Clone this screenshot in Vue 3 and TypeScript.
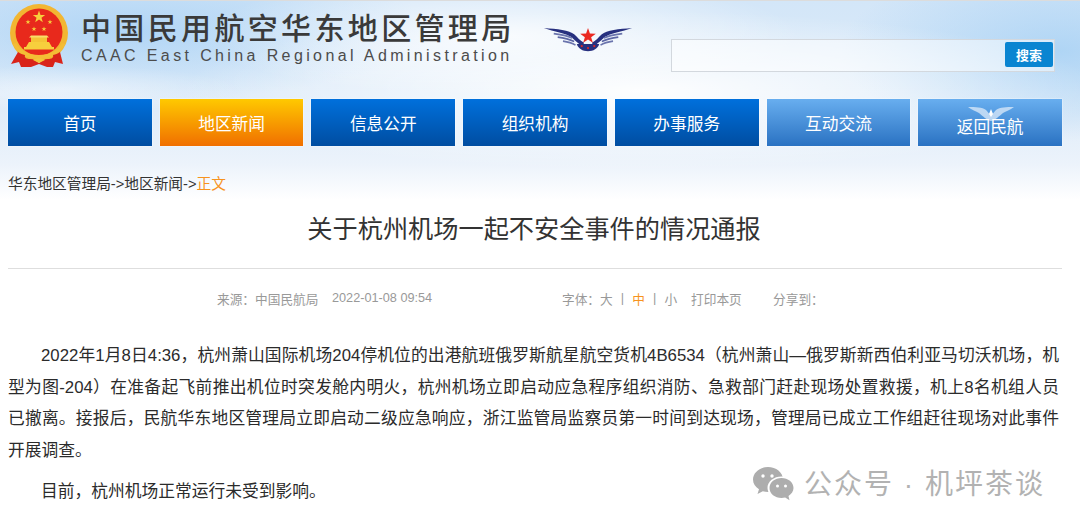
<template>
  <div class="page">
    <div class="sky">
      <header class="masthead">
        <svg class="emblem" viewBox="9 3 60 65" width="60" height="65" aria-hidden="true">
          <circle cx="39" cy="33" r="29" fill="#f2b632" />
          <circle cx="39" cy="32" r="23.5" fill="#e8291c" />
          <polygon v-for="star in emblemStars" :key="star.x" :points="starPoints(star.x, star.y, star.r)" fill="#f7cf3d" />
          <path d="M29 42h20l3 5H26z" fill="#f7cf3d" />
          <rect x="31" y="37" width="16" height="5" fill="#f5c437" />
          <path d="M29 37.5h20l-2-2H31z" fill="#f9dd6a" />
          <rect x="24" y="47" width="30" height="2.5" fill="#f7cf3d" />
          <path d="M13 44c4 10 15 15 26 15s22-5 26-15l-3-1c-4 8-13 12-23 12s-19-4-23-12z" fill="#f4bd35" />
          <path d="M18 52c3 2 4 2 7 3-1 3 2 4 5 4 4 0 6 2 9 4 3-2 5-4 9-4 3 0 6-1 5-4 3-1 4-1 7-3l3 12-8-2-2 5H47l-8-3-8 3H21l-2-5-8 2z" fill="#d9241a" />
          <path d="M33 60c2-2 10-2 12 0l-6 3z" fill="#f4c53a" />
        </svg>
        <div class="org">
          <div class="org-cn">中国民用航空华东地区管理局</div>
          <div class="org-en">CAAC East China Regional Administration</div>
        </div>
        <svg class="wings" viewBox="30 40 268 82" width="90" height="27" aria-hidden="true">
          <g>
            <path d="M30 49C70 52 108 56 122 68c10 9 18 20 30 26l-4 10c-15-6-26-20-36-28C98 66 60 60 30 49z" fill="#27307f" />
            <path d="M60 66c25 3 45 7 56 14" stroke="#6a74ad" stroke-width="5" fill="none" />
            <path d="M72 77c20 3 36 7 50 13" stroke="#5c66a5" stroke-width="5" fill="none" />
            <path d="M88 89c14 2 28 6 38 12" stroke="#6a74ad" stroke-width="5" fill="none" />
          </g>
          <g>
            <path d="M298 49c-40 3-78 7-92 19-10 9-18 20-30 26l4 10c15-6 26-20 36-28 14-10 52-16 82-27z" fill="#27307f" />
            <path d="M268 66c-25 3-45 7-56 14" stroke="#6a74ad" stroke-width="5" fill="none" />
            <path d="M256 77c-20 3-36 7-50 13" stroke="#5c66a5" stroke-width="5" fill="none" />
            <path d="M240 89c-14 2-28 6-38 12" stroke="#6a74ad" stroke-width="5" fill="none" />
          </g>
          <path d="M130 98h68c-4 14-18 22-34 22s-30-8-34-22z" fill="#27307f" />
          <circle cx="145" cy="104" r="3.5" fill="#d8272a" />
          <circle cx="164" cy="110" r="3.5" fill="#d8272a" />
          <circle cx="183" cy="104" r="3.5" fill="#d8272a" />
          <polygon :points="starPoints(164, 74, 25)" fill="#ea2a22" />
        </svg>
        <form class="search" @submit.prevent>
          <input class="search-input" type="text" aria-label="搜索" />
          <button class="search-btn" type="submit">搜索</button>
        </form>
      </header>

      <nav class="nav">
        <a
          v-for="item in navItems"
          :key="item.text"
          href="#"
          class="nav-item"
          :class="item.kind"
        >
          <svg v-if="item.kind === 'back'" class="nav-wings" viewBox="0 0 46 16" width="46" height="16" aria-hidden="true">
            <path d="M0 1c8 0 14 0 18 3 2 2 3 4 5 5 2-1 3-3 5-5 4-3 10-3 18-3-4 3-8 4-11 6-4 3-7 7-12 8-5-1-8-5-12-8C8 5 4 4 0 1z" fill="#d6e6f7" fill-opacity=".8" />
            <polygon points="23,3 25,8 23,11 21,8" fill="#fff" />
          </svg>
          <span class="nav-text">{{ item.text }}</span>
        </a>
      </nav>

      <div class="crumbs">华东地区管理局-&gt;地区新闻-&gt;<span class="crumb-now">正文</span></div>
    </div>

    <main class="article">
      <h1 class="title">关于杭州机场一起不安全事件的情况通报</h1>
      <div class="meta">
        <span class="meta-source">来源：中国民航局</span>
        <span class="meta-date">2022-01-08 09:54</span>
        <span class="meta-font">字体：</span>
        <span class="meta-size">大</span>
        <span class="meta-sep">|</span>
        <span class="meta-size is-on">中</span>
        <span class="meta-sep">|</span>
        <span class="meta-size">小</span>
        <span class="meta-print">打印本页</span>
        <span class="meta-share">分享到：</span>
      </div>
      <div class="body">
        <p v-for="(para, i) in paragraphs" :key="i">
          <span v-for="line in para" :key="line" class="line">{{ line }}</span>
        </p>
      </div>
    </main>

    <div class="watermark">
      <svg class="wechat" viewBox="0 0 42 34" width="42" height="34" aria-hidden="true">
        <path d="M15 0C7 0 0 5.500 0 12.500c0 4 2.300 7.500 6 9.800L4.500 27l5.300-2.700c1.600.5 3.400.8 5.200.8 8 0 15-5.500 15-12.600S23 0 15 0z" fill="#adadad" />
        <ellipse cx="28.500" cy="21" rx="14" ry="11.500" fill="#fff" />
        <path d="M28.500 11C22 11 16.500 15.300 16.500 21s5.500 10 12 10c1.300 0 2.500-.2 3.700-.5l4.300 2.800-1-4.300c3-2 5-4.800 5-8C40.500 15.300 35 11 28.500 11z" fill="#adadad" />
        <circle cx="10" cy="9" r="1.700" fill="#fff" />
        <circle cx="19" cy="9" r="1.700" fill="#fff" />
        <circle cx="24.500" cy="19" r="1.500" fill="#fff" />
        <circle cx="32.500" cy="19" r="1.500" fill="#fff" />
      </svg>
      <span class="watermark-text">公众号 · 机坪茶谈</span>
    </div>
  </div>
</template>

<script setup lang="ts">
interface NavItem {
  text: string
  kind: string
}

const navItems: NavItem[] = [
  { text: '首页', kind: 'dark' },
  { text: '地区新闻', kind: 'active' },
  { text: '信息公开', kind: 'dark' },
  { text: '组织机构', kind: 'dark' },
  { text: '办事服务', kind: 'dark' },
  { text: '互动交流', kind: 'light' },
  { text: '返回民航', kind: 'back' },
]

const emblemStars = [
  { x: 39, y: 17, r: 6.5 },
  { x: 28, y: 22, r: 2.6 },
  { x: 50, y: 22, r: 2.6 },
  { x: 34, y: 29, r: 2.6 },
  { x: 44, y: 29, r: 2.6 },
]

const paragraphs: string[][] = [
  [
    '2022年1月8日4:36，杭州萧山国际机场204停机位的出港航班俄罗斯航星航空货机4B6534（杭州萧山—俄罗斯新西伯利亚马切沃机场，机',
    '型为图-204）在准备起飞前推出机位时突发舱内明火，杭州机场立即启动应急程序组织消防、急救部门赶赴现场处置救援，机上8名机组人员',
    '已撤离。接报后，民航华东地区管理局立即启动二级应急响应，浙江监管局监察员第一时间到达现场，管理局已成立工作组赶往现场对此事件',
    '开展调查。',
  ],
  ['目前，杭州机场正常运行未受到影响。'],
]

function starPoints(cx: number, cy: number, r: number): string {
  const pts: string[] = []
  for (let i = 0; i < 10; i++) {
    const radius = i % 2 === 0 ? r : r * 0.4
    const angle = (Math.PI / 5) * i - Math.PI / 2
    pts.push(`${(cx + radius * Math.cos(angle)).toFixed(2)},${(cy + radius * Math.sin(angle)).toFixed(2)}`)
  }
  return pts.join(' ')
}
</script>

<style>
html,
body {
  margin: 0;
  background: #fff;
}
</style>

<style scoped>
.page {
  position: relative;
  width: 1080px;
  height: 528px;
  overflow: hidden;
  background: #fff;
  font-family: "Liberation Sans", "Noto Sans CJK SC", sans-serif;
  color: #333;
}

.sky {
  height: 200px;
  border-top: 1px solid #dcdcdc;
  box-sizing: border-box;
  background:
    radial-gradient(ellipse 300px 60px at 500px 35px, rgba(255, 255, 255, 0.8), transparent),
    radial-gradient(ellipse 460px 80px at 640px 90px, rgba(255, 255, 255, 0.95), transparent),
    radial-gradient(ellipse 180px 24px at 60px 88px, rgba(255, 255, 255, 0.45), transparent),
    radial-gradient(ellipse 220px 90px at 1060px 50px, rgba(165, 208, 244, 0.8), transparent),
    radial-gradient(ellipse 300px 70px at 130px 30px, rgba(170, 210, 245, 0.85), transparent),
    linear-gradient(180deg, #d3e6f8 0%, #dfecf9 55%, #ecf3fb 82%, #fff 100%);
}

.masthead {
  display: flex;
  align-items: flex-start;
  height: 98px;
  padding: 2px 25px 0 10px;
  box-sizing: border-box;
}

.emblem {
  flex: none;
  margin-left: -1px;
}

.org {
  margin-left: 12px;
  padding-top: 8px;
  width: 440px;
}

.org-cn {
  font-size: 30px;
  line-height: 36px;
  letter-spacing: 3.350px;
  font-weight: 500;
  color: #3a3a3a;
  white-space: nowrap;
}

.org-en {
  font-size: 16px;
  line-height: 18px;
  letter-spacing: 3.380px;
  color: #4c4c4c;
  white-space: nowrap;
}

.wings {
  flex: none;
  margin: 22px 0 0 22px;
}

.search {
  position: relative;
  margin: 36px 0 0 auto;
  width: 384px;
  height: 33px;
}

.search-input {
  display: block;
  width: 100%;
  height: 100%;
  box-sizing: border-box;
  border: 1.500px solid #d3d8de;
  background: rgba(255, 255, 255, 0.5);
  outline: none;
}

.search-btn {
  position: absolute;
  top: 3px;
  right: 2px;
  width: 48px;
  height: 25px;
  padding: 0;
  border: 0;
  border-radius: 2px;
  background: #0a85d1;
  color: #fff;
  font: 700 13px "Liberation Sans", "Noto Sans CJK SC", sans-serif;
}

.nav {
  display: flex;
  gap: 8px;
  padding: 0 18px 0 8px;
}

.nav-item {
  position: relative;
  flex: 1;
  display: flex;
  align-items: center;
  justify-content: center;
  height: 47px;
  color: #fff;
  font-size: 16.700px;
  text-decoration: none;
  box-shadow: 0 0 0 0.5px rgba(255, 255, 255, 0.5);
}

.dark {
  background: linear-gradient(180deg, #0070dc, #004da1);
}

.active {
  background: linear-gradient(180deg, #ffc900, #f06f00);
}

.light,
.back {
  background: linear-gradient(180deg, #68aeef, #2a72c2);
}

.back .nav-text {
  position: relative;
  top: 3px;
}

.nav-wings {
  position: absolute;
  top: 7px;
  left: 50%;
  margin-left: -22px;
}

.crumbs {
  margin: 28px 0 0 8px;
  font-size: 14.700px;
  line-height: 20px;
  color: #333;
}

.crumb-now {
  color: #f7931e;
}

.article {
  padding: 0 18px 0 8px;
}

.title {
  margin: 12px 0 0;
  padding: 0 2px 22px 0;
  border-bottom: 1.500px solid #dedede;
  text-align: center;
  font-size: 25.200px;
  line-height: 34px;
  font-weight: 400;
  color: #333;
}

.meta {
  display: flex;
  align-items: center;
  height: 18px;
  margin-top: 20px;
  padding-left: 209px;
  font-size: 12.700px;
  color: #999;
  white-space: nowrap;
}

.meta-source {
  width: 115px;
}

.meta-date {
  width: 230px;
}

.meta-font {
  width: 38px;
}

.meta-sep {
  width: 29.500px;
  text-align: center;
  margin: 0 -5px;
}

.meta-size {
  width: 12.700px;
}

.is-on {
  color: #f7931e;
}

.meta-print {
  margin-left: 14px;
  width: 82px;
}

.body {
  margin-top: 33px;
  padding-right: 3px;
  font-size: 16.750px;
  line-height: 31.700px;
  color: #2b2b2b;
}

.body p {
  margin: 0 0 9.600px;
}

.line {
  display: block;
  white-space: nowrap;
  text-align: justify;
  text-align-last: justify;
}

.line:first-child {
  padding-left: 33px;
}

.line:last-child {
  text-align-last: left;
}
</style>

<style scoped>
.watermark {
  position: absolute;
  left: 753px;
  top: 467px;
  display: flex;
  align-items: center;
  gap: 9px;
  padding: 0 34px 0 0;
  background: #fff;
}

.watermark-text {
  font-size: 28px;
  line-height: 34px;
  letter-spacing: 2px;
  color: #b2b2b2;
  white-space: nowrap;
  position: relative;
  top: 1px;
}
</style>
